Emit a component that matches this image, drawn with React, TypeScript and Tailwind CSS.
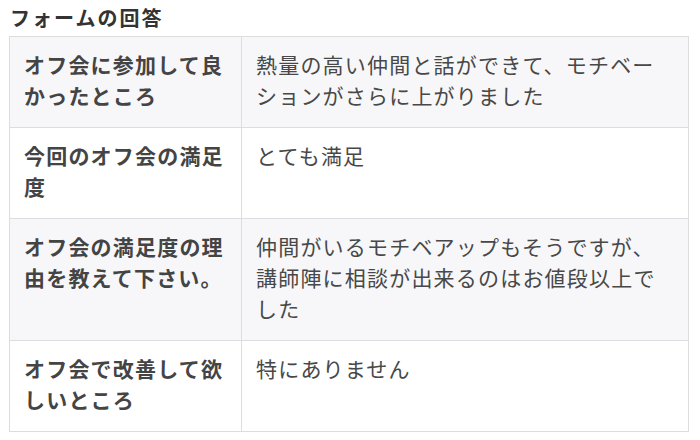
import React from "react";

const rows = [
  {
    q: "オフ会に参加して良かったところ",
    a: "熱量の高い仲間と話ができて、モチベーションがさらに上がりました",
  },
  { q: "今回のオフ会の満足度", a: "とても満足" },
  {
    q: "オフ会の満足度の理由を教えて下さい。",
    a: "仲間がいるモチベアップもそうですが、講師陣に相談が出来るのはお値段以上でした",
  },
  { q: "オフ会で改善して欲しいところ", a: "特にありません" },
];

export default function App() {
  return (
    <div
      className="w-[700px] h-[440px] bg-white overflow-hidden pl-[9px] pt-[4px]"
      style={{ fontFamily: '"Noto Sans CJK JP", "Noto Sans", sans-serif' }}
    >
      <h2 className="pl-px text-[20px] leading-[28px] font-bold text-[#333] tracking-[2px] mb-[4px]">
        フォームの回答
      </h2>
      <table className="w-[680px] border-collapse table-fixed">
        <colgroup>
          <col className="w-[232px]" />
          <col />
        </colgroup>
        <tbody>
          {rows.map((r, i) => (
            <tr key={i} className={i % 2 === 0 ? "bg-[#f7f7f9]" : "bg-white"}>
              <th className="border border-[#dddddd] align-top text-left font-bold text-[#444] text-[21px] leading-[31px] tracking-[1.2px] pl-[14px] pr-[8px] pt-[12px] pb-[16px] break-all">
                {r.q}
              </th>
              <td className="border border-[#dddddd] align-top text-left font-normal text-[#484848] text-[21px] leading-[31px] tracking-[1.2px] pl-[14px] pr-[12px] pt-[12px] pb-[16px]">
                {r.a}
              </td>
            </tr>
          ))}
        </tbody>
      </table>
    </div>
  );
}
